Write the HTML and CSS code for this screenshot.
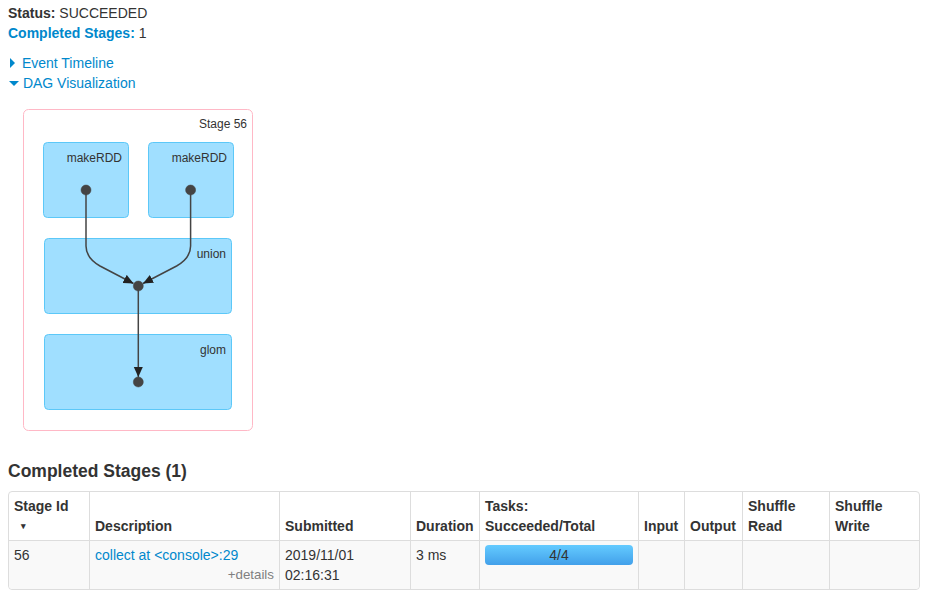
FILE: index.html
```
<!DOCTYPE html>
<html>
<head>
<meta charset="utf-8">
<title>Spark Job</title>
<link rel="stylesheet" href="styles.css">
</head>
<body>
<div class="page">
  <ul class="summary">
    <li><strong>Status:</strong> SUCCEEDED</li>
    <li><a class="link" href="#completed"><strong>Completed Stages:</strong></a> 1</li>
  </ul>
  <div class="toggle"><span class="arrow-closed"></span> <a class="link">Event Timeline</a></div>
  <div class="toggle"><span class="arrow-open"></span> <a class="link">DAG Visualization</a></div>
  <svg class="dag" width="260" height="345" viewBox="8 93 260 345" xmlns="http://www.w3.org/2000/svg">
    <defs>
      <marker id="arr" viewBox="0 0 10 10" refX="10" refY="5" markerUnits="userSpaceOnUse" markerWidth="10" markerHeight="10" orient="auto">
        <path d="M0,0.5 L10,5 L0,9.5 z" fill="#222"/>
      </marker>
    </defs>
    <rect class="stage" x="23.5" y="109.5" width="229" height="321" rx="5" ry="5"/>
    <text class="lbl" x="247" y="128">Stage 56</text>
    <rect class="op" x="43.5" y="142.5" width="85" height="75" rx="4" ry="4"/>
    <text class="lbl" x="122" y="162">makeRDD</text>
    <rect class="op" x="148.5" y="142.5" width="85" height="75" rx="4" ry="4"/>
    <text class="lbl" x="227" y="162">makeRDD</text>
    <rect class="op" x="44.5" y="238.5" width="187" height="75" rx="4" ry="4"/>
    <text class="lbl" x="226" y="258">union</text>
    <rect class="op" x="44.5" y="334.5" width="187" height="75" rx="4" ry="4"/>
    <text class="lbl" x="226" y="354">glom</text>
    <path class="edge" d="M86,190 L86,246 Q86,258 100,266 L133.5,283.5" marker-end="url(#arr)"/>
    <path class="edge" d="M190.6,190 L190.6,246 Q190.6,258 176.6,266 L143,283.5" marker-end="url(#arr)"/>
    <path class="edge" d="M138.3,290 L138.3,377" marker-end="url(#arr)"/>
    <circle class="dot" cx="86" cy="190" r="5"/>
    <circle class="dot" cx="190.6" cy="190" r="5"/>
    <circle class="dot" cx="138.3" cy="286" r="5"/>
    <circle class="dot" cx="138.3" cy="382" r="5"/>
  </svg>
  <h4 class="section-title" id="completed">Completed Stages (1)</h4>
  <table class="stages">
    <thead>
      <tr>
        <th class="w-id">Stage Id <span class="sort">&#x25BE;</span></th>
        <th class="w-desc">Description</th>
        <th class="w-sub">Submitted</th>
        <th class="w-dur">Duration</th>
        <th class="w-tasks">Tasks: Succeeded/Total</th>
        <th class="w-in">Input</th>
        <th class="w-out">Output</th>
        <th class="w-sr">Shuffle Read</th>
        <th class="w-sw">Shuffle Write</th>
      </tr>
    </thead>
    <tbody>
      <tr>
        <td>56</td>
        <td><a class="link">collect at &lt;console&gt;:29</a><div class="details">+details</div></td>
        <td>2019/11/01 02:16:31</td>
        <td>3 ms</td>
        <td><div class="progress">4/4</div></td>
        <td></td>
        <td></td>
        <td></td>
        <td></td>
      </tr>
    </tbody>
  </table>
</div>
</body>
</html>
```
FILE: styles.css
```
body {
  margin: 0;
  font-family: "Liberation Sans", Arial, sans-serif;
  font-size: 14px;
  line-height: 20px;
  color: #333;
  background: #fff;
}

.page {
  padding: 3px 12px 0 8px;
}

.summary {
  list-style: none;
  margin: 0 0 10px;
  padding: 0;
}

.link {
  color: #08c;
  text-decoration: none;
}

.toggle {
  display: block;
}

.arrow-closed {
  display: inline-block;
  width: 0;
  height: 0;
  border-top: 5px solid transparent;
  border-bottom: 5px solid transparent;
  border-left: 5px solid #08c;
  margin-left: 2px;
  margin-right: 3px;
}

.arrow-open {
  display: inline-block;
  width: 0;
  height: 0;
  border-left: 5px solid transparent;
  border-right: 5px solid transparent;
  border-top: 5px solid #08c;
  margin-bottom: 2px;
  margin-left: 1px;
}

.dag {
  display: block;
}

.dag .stage {
  fill: #fff;
  stroke: #ffb8c6;
  stroke-width: 1px;
}

.dag .op {
  fill: #a0dfff;
  stroke: #5cc8f8;
  stroke-width: 1px;
}

.dag .lbl {
  font-family: "Liberation Sans", Arial, sans-serif;
  font-size: 12px;
  fill: #333;
  text-anchor: end;
}

.dag .edge {
  fill: none;
  stroke: #444;
  stroke-width: 1.5px;
}

.dag .dot {
  fill: #444;
  stroke: #444;
  stroke-width: 0.5px;
}

.section-title {
  margin: 23px 0 10px;
  font-size: 17.5px;
  line-height: 20px;
  font-weight: bold;
  color: #333;
}

.stages {
  border-collapse: separate;
  border-spacing: 0;
  border: 1px solid #ddd;
  border-radius: 4px;
  table-layout: fixed;
  width: 912px;
}

.stages th,
.stages td {
  box-sizing: border-box;
  padding: 4px 5px;
  border-left: 1px solid #ddd;
  border-top: 1px solid #ddd;
  text-align: left;
}

.stages th:first-child,
.stages td:first-child {
  border-left: 0;
}

.stages th {
  border-top: 0;
  vertical-align: bottom;
  font-weight: bold;
}

.stages td {
  vertical-align: top;
  background: #f9f9f9;
}

.stages tbody tr:last-child td:first-child {
  border-bottom-left-radius: 4px;
}

.stages tbody tr:last-child td:last-child {
  border-bottom-right-radius: 4px;
}

.w-id { width: 80px; }
.w-desc { width: 190px; }
.w-sub { width: 131px; }
.w-dur { width: 69px; }
.w-tasks { width: 159px; }
.w-in { width: 46px; }
.w-out { width: 58px; }
.w-sr { width: 87px; }
.w-sw { width: 90px; }

.sort {
  display: block;
  padding-left: 7px;
  font-size: 9px;
  line-height: 20px;
}

.details {
  text-align: right;
  font-size: 13.33px;
  color: #808080;
}

.progress {
  height: 20px;
  line-height: 20px;
  border-radius: 4px;
  background: linear-gradient(to bottom, #64cbff, #42a0ea);
  text-align: center;
  color: #333;
}
```
